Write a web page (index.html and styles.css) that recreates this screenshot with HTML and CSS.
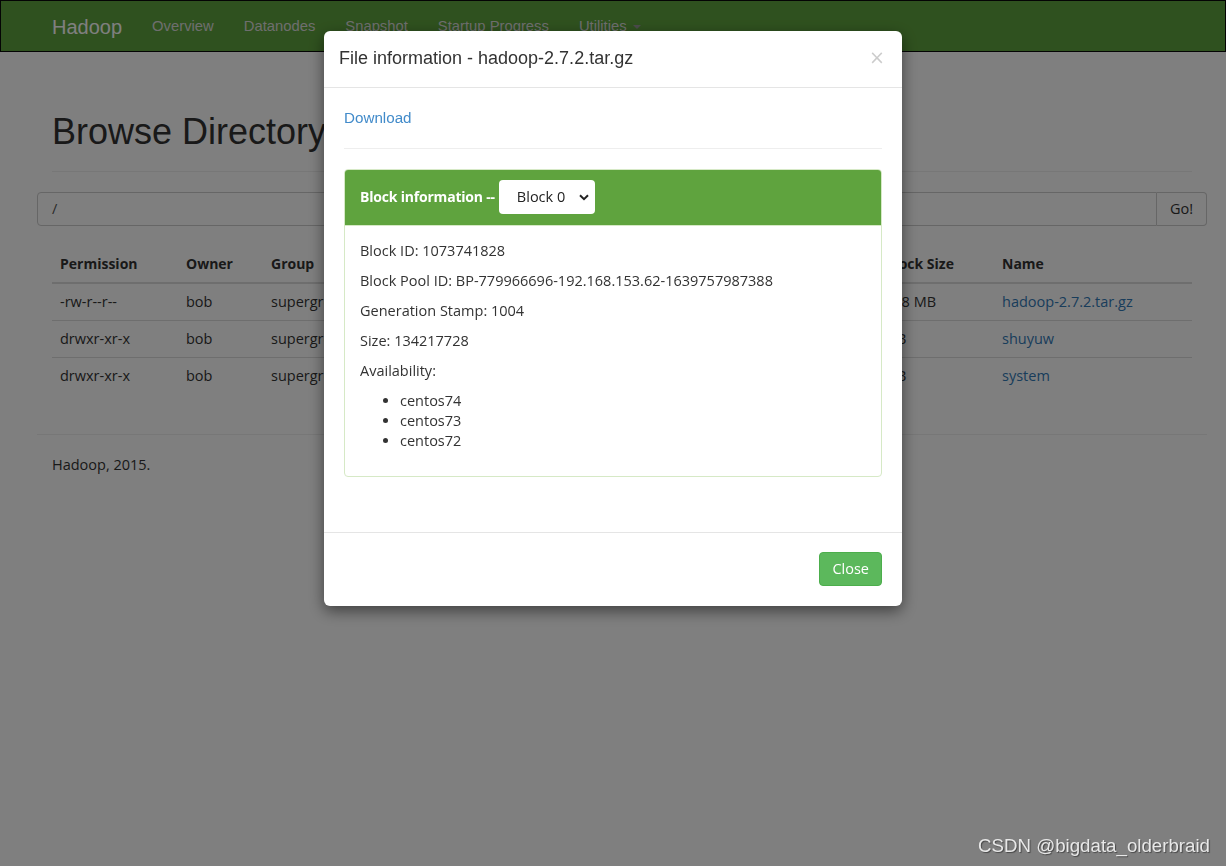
FILE: index.html
```html
<!DOCTYPE html>
<html>
<head>
<meta charset="utf-8">
<title>Browsing HDFS</title>
<link rel="stylesheet" href="styles.css">
</head>
<body>
<nav class="navbar">
  <a class="brand">Hadoop</a>
  <ul class="nav">
    <li>Overview</li>
    <li>Datanodes</li>
    <li>Snapshot</li>
    <li>Startup Progress</li>
    <li>Utilities <span class="caret"></span></li>
  </ul>
</nav>

<div class="container">
  <div class="page-header"><h1>Browse Directory</h1></div>
  <div class="input-group">
    <div class="input">/</div>
    <div class="go">Go!</div>
  </div>
  <table class="table">
    <thead>
      <tr><th class="c1">Permission</th><th class="c2">Owner</th><th class="c3">Group</th><th class="c4">Size</th><th class="c5">Last Modified</th><th class="c6">Replication</th><th class="c7">Block Size</th><th>Name</th></tr>
    </thead>
    <tbody>
      <tr><td>-rw-r--r--</td><td>bob</td><td>supergroup</td><td>197.66 MB</td><td>12/17/2021</td><td>3</td><td>128 MB</td><td><a>hadoop-2.7.2.tar.gz</a></td></tr>
      <tr><td>drwxr-xr-x</td><td>bob</td><td>supergroup</td><td>0 B</td><td>12/17/2021</td><td>0</td><td>0 B</td><td><a>shuyuw</a></td></tr>
      <tr><td>drwxr-xr-x</td><td>bob</td><td>supergroup</td><td>0 B</td><td>12/17/2021</td><td>0</td><td>0 B</td><td><a>system</a></td></tr>
    </tbody>
  </table>
  <hr class="foot-rule">
  <p class="footer">Hadoop, 2015.</p>
</div>

<div class="backdrop"></div>

<div class="modal">
  <div class="modal-header">
    <span class="close">×</span>
    <h4>File information - hadoop-2.7.2.tar.gz</h4>
  </div>
  <div class="modal-body">
    <a class="download">Download</a>
    <hr class="body-rule">
    <div class="panel">
      <div class="panel-heading">
        <span class="panel-title">Block information --</span>
        <div class="select">Block 0
          <svg class="chev" width="10" height="7" viewBox="0 0 10 7"><path d="M1 1.2 L5 5.2 L9 1.2" fill="none" stroke="#222" stroke-width="2"/></svg>
        </div>
      </div>
      <div class="panel-body">
        <p>Block ID: 1073741828</p>
        <p>Block Pool ID: BP-779966696-192.168.153.62-1639757987388</p>
        <p>Generation Stamp: 1004</p>
        <p>Size: 134217728</p>
        <p>Availability:</p>
        <ul>
          <li>centos74</li>
          <li>centos73</li>
          <li>centos72</li>
        </ul>
      </div>
    </div>
  </div>
  <div class="modal-footer">
    <span class="btn-close">Close</span>
  </div>
</div>

<div class="watermark">CSDN @bigdata_olderbraid</div>
</body>
</html>
```

FILE: styles.css
```css
* { box-sizing: border-box; }
html, body { margin: 0; padding: 0; }
body {
  font-family: "Open Sans", "Liberation Sans", sans-serif;
  font-size: 14.5px;
  line-height: 20px;
  color: #333;
  background: #fff;
  width: 1226px;
  height: 866px;
  overflow: hidden;
}

/* navbar */
.navbar {
  height: 52px;
  background: #5fa33e;
  border: 1px solid #080808;
  display: flex;
  align-items: center;
  padding-left: 51px;
  font-family: "Liberation Sans", Arial, sans-serif;
}
.brand {
  font-size: 20px;
  color: #fff;
  padding-right: 15px;
  padding-top: 2px;
}
.nav {
  display: flex;
  list-style: none;
  margin: 0;
  padding: 0;
}
.nav li {
  font-size: 14.8px;
  color: #ddd;
  padding: 0 15px;
}
.caret {
  display: inline-block;
  width: 0; height: 0;
  border-top: 4px solid #999;
  border-left: 4px solid transparent;
  border-right: 4px solid transparent;
  vertical-align: middle;
  margin-left: 2px;
}

/* page */
.container {
  margin-left: 37px;
  width: 1170px;
}
.page-header {
  margin: 40px 15px 20px;
  padding-top: 20px;
  padding-bottom: 9px;
  border-bottom: 1px solid #eee;
}
.page-header h1 {
  margin: 0 0 10px;
  font-family: "Liberation Sans", Arial, sans-serif;
  font-size: 36px;
  line-height: 1.1;
  font-weight: 500;
  color: #333;
}
.input-group {
  display: flex;
  height: 34px;
}
.input {
  flex: 1;
  border: 1px solid #ccc;
  border-radius: 4px 0 0 4px;
  padding: 6px 14px;
  color: #555;
}
.go {
  width: 50px;
  border: 1px solid #ccc;
  border-left: none;
  border-radius: 0 4px 4px 0;
  text-align: center;
  padding: 6px 0;
  color: #333;
  background: #fff;
}
.table {
  margin: 20px 15px 0;
  width: 1140px;
  border-collapse: collapse;
  table-layout: fixed;
}
.table th, .table td {
  text-align: left;
  padding: 8px;
  line-height: 20px;
  white-space: nowrap;
  overflow: hidden;
}
.table th {
  font-weight: 700;
  font-size: 14px;
  border-bottom: 2px solid #ddd;
}
.table td { border-top: 1px solid #ddd; }
.table tbody tr:first-child td { border-top: none; }
.c1 { width: 126px; }
.c2 { width: 85px; }
.c3 { width: 120px; }
.c4 { width: 110px; }
.c5 { width: 250px; }
.c6 { width: 134px; }
.c7 { width: 117px; }
.table a { color: #337ab7; }
.foot-rule {
  margin: 40px 0 0;
  border: 0;
  border-top: 1px solid #eee;
}
.footer { margin: 20px 15px; }

/* overlay */
.backdrop {
  position: fixed;
  inset: 0;
  background: rgba(0, 0, 0, 0.5);
}

/* modal */
.modal {
  position: fixed;
  left: 324px;
  top: 31px;
  width: 578px;
  background: #fff;
  border-radius: 6px;
  box-shadow: 0 5px 15px rgba(0, 0, 0, 0.5);
}
.modal-header {
  padding: 15px;
  border-bottom: 1px solid #e5e5e5;
}
.modal-header h4 {
  margin: 0;
  font-family: "Liberation Sans", Arial, sans-serif;
  font-size: 18px;
  font-weight: 500;
  line-height: 25.7px;
  color: #333;
}
.close {
  float: right;
  font-family: "DejaVu Sans", sans-serif;
  font-size: 19px;
  font-weight: 400;
  line-height: 1;
  color: #000;
  opacity: 0.2;
  margin-top: 2px;
  margin-right: 2px;
}
.modal-body { padding: 20px; }
.download {
  display: block;
  font-family: "Liberation Sans", Arial, sans-serif;
  font-size: 15.2px;
  line-height: 20px;
  color: #428bca;
}
.body-rule {
  margin: 20px 0;
  border: 0;
  border-top: 1px solid #eee;
}
.panel {
  border: 1px solid #d6e9c6;
  border-radius: 4px;
  margin-bottom: 20px;
}
.panel-heading {
  background: #5fa33e;
  color: #fff;
  padding: 10px 15px;
  border-bottom: 1px solid #d6e9c6;
  border-radius: 3px 3px 0 0;
  display: flex;
  align-items: center;
  height: 56px;
}
.panel-title {
  font-weight: 700;
  font-size: 14px;
  letter-spacing: -0.2px;
}
.select {
  margin-left: 4px;
  width: 96px;
  height: 34px;
  background: #fff;
  border-radius: 4px;
  color: #222;
  font-size: 14.5px;
  display: flex;
  align-items: center;
  padding-left: 18px;
  gap: 14px;
}
.chev { display: block; margin-top: 1px; }
.panel-body { padding: 15px; }
.panel-body p { margin: 0 0 10px; }
.panel-body ul { margin: 0 0 10px; padding-left: 40px; }

.modal-footer {
  margin-top: 15px;
  padding: 19px 20px 20px;
  border-top: 1px solid #e5e5e5;
  display: flex;
  justify-content: flex-end;
}
.btn-close {
  display: inline-block;
  background: #5cb85c;
  border: 1px solid #4cae4c;
  color: #fff;
  border-radius: 4px;
  padding: 6px 12px;
  font-size: 14.5px;
  line-height: 20px;
  height: 34px;
}

.watermark {
  position: fixed;
  right: 16px;
  bottom: 10px;
  font-family: "Liberation Sans", Arial, sans-serif;
  font-size: 18.7px;
  color: #e8e8e8;
  text-shadow: 1px 1px 1px rgba(0, 0, 0, 0.45);
}
```
